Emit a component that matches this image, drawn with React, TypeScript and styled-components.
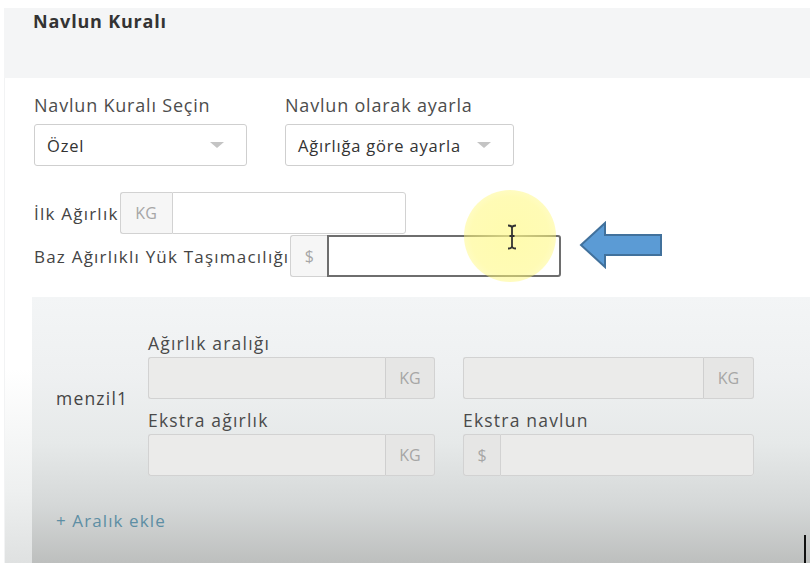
import React from "react";
import styled, { createGlobalStyle } from "styled-components";

const Global = createGlobalStyle`
  html, body { margin: 0; padding: 0; background: #ffffff; }
  body { font-family: "Open Sans", "Noto Sans", sans-serif; overflow: hidden; }
  * { box-sizing: border-box; }
`;

const Frame = styled.div`
  position: relative;
  width: 810px;
  height: 569px;
  background: #ffffff;
  padding: 8px 0 6px 4px;
  display: flex;
  flex-direction: column;
  overflow: hidden;
`;

const Header = styled.div`
  height: 70px;
  flex: none;
  background: #f4f5f6;
  padding: 1px 0 0 29px;
  font-size: 18px;
  line-height: 24px;
  font-weight: 700;
  color: #333;
  letter-spacing: 0.8px;
`;

const Content = styled.div`
  flex: 1;
  display: flex;
  flex-direction: column;
  padding: 16px 0 0 29px;
  border-left: 1px solid #f2f3f4;
  background: linear-gradient(#ffffff 0%, #ffffff 60%, #eef0f0 85%, #dfe1e1 100%);
`;

const SelectRow = styled.div`
  display: flex;
  gap: 38px;
`;

const Field = styled.div`
  display: flex;
  flex-direction: column;
  gap: 8px;
`;

const Label = styled.div`
  font-size: 18px;
  color: #4d4d4d;
  line-height: 22px;
  letter-spacing: 0.8px;
  white-space: nowrap;
`;

const Select = styled.div<{ $w: number }>`
  width: ${(p) => p.$w}px;
  height: 42px;
  border: 1px solid #cfcfcf;
  border-radius: 3px;
  background: #fff;
  display: flex;
  align-items: center;
  justify-content: space-between;
  padding: 0 22px 0 12px;
  font-size: 16.5px;
  letter-spacing: 0.8px;
  color: #333;
  white-space: nowrap;
`;

const Caret = styled.span`
  width: 0;
  height: 0;
  flex: none;
  border-left: 7px solid transparent;
  border-right: 7px solid transparent;
  border-top: 6px solid #c4c4c4;
`;

const InlineRows = styled.div`
  display: flex;
  flex-direction: column;
  gap: 1px;
  margin-top: 26px;
`;

const InlineRow = styled.div`
  display: flex;
  align-items: center;
`;

const InlineLabel = styled.span`
  font-size: 17px;
  color: #444;
  letter-spacing: 1.22px;
  margin-right: 1px;
  white-space: nowrap;
`;

const Group = styled.div<{ $w: number; $muted?: boolean }>`
  width: ${(p) => p.$w}px;
  height: 42px;
  flex: none;
  display: flex;
  border-radius: 3px;
  background: ${(p) => (p.$muted ? "#ebebea" : "#fff")};
`;

const Addon = styled.div<{ $w: number; $side: "left" | "right"; $muted?: boolean }>`
  width: ${(p) => p.$w}px;
  flex: none;
  display: flex;
  align-items: center;
  justify-content: center;
  font-size: 16px;
  color: #a6a6a6;
  background: ${(p) => (p.$muted ? "#e6e6e5" : "#f6f6f6")};
  border: 1px solid #d2d2d2;
  border-radius: ${(p) => (p.$side === "left" ? "3px 0 0 3px" : "0 3px 3px 0")};
  ${(p) => (p.$side === "left" ? "border-right: none;" : "border-left: 1px solid #cfcfcf;")}
`;

const Input = styled.div<{ $side: "left" | "right"; $focus?: boolean }>`
  flex: 1;
  border: ${(p) => (p.$focus ? "2px solid #6e6e6e" : "1px solid #d2d2d2")};
  border-radius: ${(p) => (p.$side === "left" ? "0 3px 3px 0" : "3px 0 0 3px")};
  ${(p) => (p.$side === "right" ? "border-right: none;" : "")}
`;

const RangeBox = styled.div`
  flex: 1;
  margin: 20px 0 0 -2px;
  background: linear-gradient(#f3f5f6 0%, #eef0f1 30%, #e6e9e9 55%, #d5d8d8 78%, #bdbfbe 100%);
  padding: 36px 0 0 24px;
  display: flex;
  flex-direction: column;
`;

const RangeRow = styled.div`
  display: flex;
  align-items: center;
`;

const RangeName = styled.div`
  width: 92px;
  font-size: 17.5px;
  letter-spacing: 1.2px;
  color: #444;
  padding-bottom: 14px;
`;

const Grid = styled.div`
  display: grid;
  grid-template-columns: 287px 291px;
  column-gap: 28px;
  row-gap: 0;
`;

const Cell = styled.div<{ $top?: number }>`
  display: flex;
  flex-direction: column;
  gap: 3px;
  margin-top: ${(p) => p.$top ?? 0}px;
`;

const RangeLabel = styled.div`
  font-size: 17.5px;
  line-height: 21px;
  letter-spacing: 1.2px;
  color: #4a4a4a;
  white-space: nowrap;
`;

const AddLink = styled.div`
  margin-top: 33px;
  font-size: 17px;
  color: #5d8ea4;
  letter-spacing: 1.1px;
`;

const Highlight = styled.div`
  position: absolute;
  left: 464px;
  top: 190px;
  width: 92px;
  height: 92px;
  border-radius: 50%;
  background: radial-gradient(circle, rgba(255, 250, 140, 0.7) 0%, rgba(255, 248, 120, 0.55) 60%, rgba(255, 248, 140, 0.25) 100%);
  pointer-events: none;
`;

const Cursor = styled.svg`
  position: absolute;
  left: 506px;
  top: 224px;
`;

const Arrow = styled.svg`
  position: absolute;
  left: 579px;
  top: 221px;
`;

const Marker = styled.div`
  position: absolute;
  left: 804px;
  top: 535px;
  width: 2px;
  height: 28px;
  background: #111;
`;

export default function App() {
  return (
    <>
      <Global />
      <Frame>
        <Header>Navlun Kuralı</Header>
        <Content>
          <SelectRow>
            <Field>
              <Label>Navlun Kuralı Seçin</Label>
              <Select $w={213}>
                <span>Özel</span>
                <Caret />
              </Select>
            </Field>
            <Field>
              <Label>Navlun olarak ayarla</Label>
              <Select $w={229}>
                <span>Ağırlığa göre ayarla</span>
                <Caret />
              </Select>
            </Field>
          </SelectRow>
          <InlineRows>
            <InlineRow>
              <InlineLabel>İlk Ağırlık</InlineLabel>
              <Group $w={286}>
                <Addon $w={52} $side="left">KG</Addon>
                <Input $side="left" />
              </Group>
            </InlineRow>
            <InlineRow>
              <InlineLabel>Baz Ağırlıklı Yük Taşımacılığı</InlineLabel>
              <Group $w={271}>
                <Addon $w={37} $side="left">$</Addon>
                <Input $side="left" $focus />
              </Group>
            </InlineRow>
          </InlineRows>
          <RangeBox>
            <RangeRow>
              <RangeName>menzil1</RangeName>
              <Grid>
                <Cell>
                  <RangeLabel>Ağırlık aralığı</RangeLabel>
                  <Group $w={287} $muted>
                    <Input $side="right" />
                    <Addon $w={50} $side="right" $muted>KG</Addon>
                  </Group>
                </Cell>
                <Cell>
                  <RangeLabel>&nbsp;</RangeLabel>
                  <Group $w={291} $muted>
                    <Input $side="right" />
                    <Addon $w={51} $side="right" $muted>KG</Addon>
                  </Group>
                </Cell>
                <Cell $top={11}>
                  <RangeLabel>Ekstra ağırlık</RangeLabel>
                  <Group $w={287} $muted>
                    <Input $side="right" />
                    <Addon $w={50} $side="right" $muted>KG</Addon>
                  </Group>
                </Cell>
                <Cell $top={11}>
                  <RangeLabel>Ekstra navlun</RangeLabel>
                  <Group $w={291} $muted>
                    <Addon $w={37} $side="left" $muted>$</Addon>
                    <Input $side="left" />
                  </Group>
                </Cell>
              </Grid>
            </RangeRow>
            <AddLink>+ Aralık ekle</AddLink>
          </RangeBox>
        </Content>
        <Highlight />
        <Cursor width="12" height="26" viewBox="0 0 12 26">
          <path d="M2 1.5 Q6 1.5 6 4 Q6 1.5 10 1.5 M6 4 V22 M2 24.5 Q6 24.5 6 22 Q6 24.5 10 24.5 M3.5 12 H8.5" stroke="#333" strokeWidth="1.8" fill="none" />
        </Cursor>
        <Arrow width="84" height="48" viewBox="0 0 84 48">
          <path d="M2 24 L26 2 L26 14 L82 14 L82 34 L26 34 L26 46 Z" fill="#5b9bd5" stroke="#41719c" strokeWidth="2" strokeLinejoin="miter" />
        </Arrow>
        <Marker />
      </Frame>
    </>
  );
}
